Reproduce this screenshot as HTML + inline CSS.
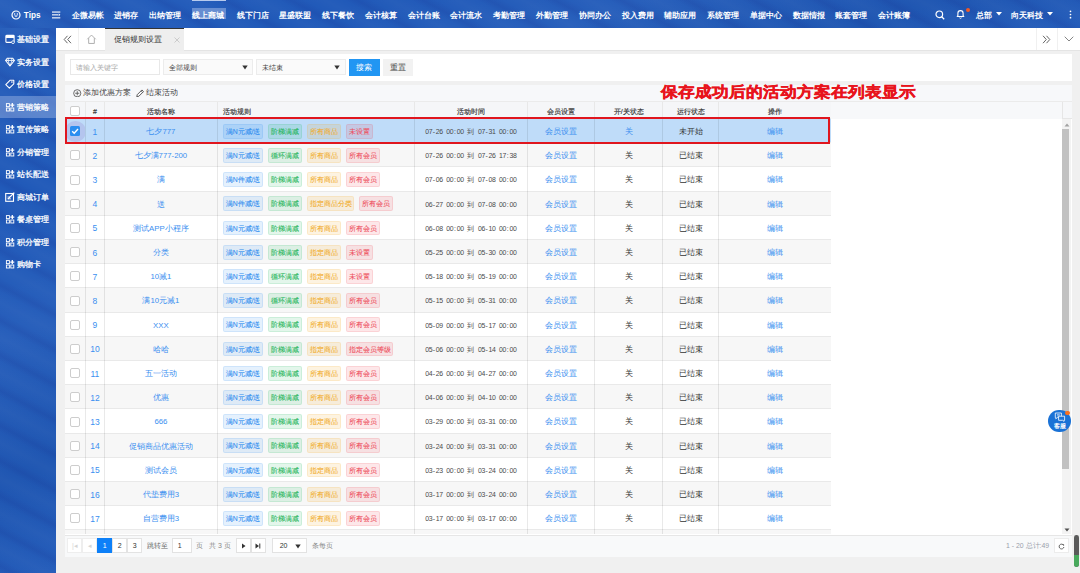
<!DOCTYPE html>
<html><head><meta charset="utf-8"><title>促销规则设置</title><style>
*{margin:0;padding:0;box-sizing:border-box}
html,body{width:1080px;height:573px;overflow:hidden;background:#f0f0f0;font-family:"Liberation Sans", sans-serif;}
.abs{position:absolute}
.bluebg{background-color:#215ab9;
background-image:
 repeating-linear-gradient(28deg, rgba(10,10,110,0.0) 0px, rgba(10,10,110,0.09) 6px, rgba(10,10,110,0.0) 13px, rgba(255,255,255,0.02) 22px, rgba(10,10,110,0.0) 31px),
 linear-gradient(160deg, rgba(255,255,255,0.03) 0%, rgba(0,0,0,0.0) 30%, rgba(255,255,255,0.03) 55%, rgba(0,0,0,0.04) 80%, rgba(255,255,255,0.02) 100%);
}
.nav{position:absolute;top:9.5px;height:11px;line-height:11px;color:#fff;font-size:8px;font-weight:bold;white-space:nowrap;letter-spacing:0px}
.side{position:absolute;left:0;width:56px;height:22.5px;color:#fff;font-size:8px;white-space:nowrap}
.side > span{position:absolute;left:17px;top:6px;line-height:11px;-webkit-text-stroke:0.25px #fff}
.side svg{position:absolute;left:5px;top:6.5px}
.cell{position:absolute;text-align:center;white-space:nowrap;overflow:visible}
.tag{position:absolute;height:14.7px;border:1px solid;border-radius:2px;font-size:6.8px;line-height:14.2px;-webkit-text-stroke:0.08px currentColor;text-align:center;white-space:nowrap}
.tb{background:rgba(45,140,240,0.12);border-color:rgba(45,140,240,0.12);color:#2d8cf0}
.tg{background:rgba(25,180,90,0.12);border-color:rgba(25,180,90,0.12);color:#1fb55a}
.to{background:rgba(240,165,20,0.13);border-color:rgba(240,165,20,0.13);color:#f2ac2a}
.tr{background:rgba(235,60,70,0.12);border-color:rgba(235,60,70,0.12);color:#ee4c5a}
.cb{position:absolute;width:10px;height:10px;border:1.5px solid #cdcdcd;border-radius:2px;background:#fff}
.link{color:#3b8ff0}
.mono{font-family:"Liberation Mono", monospace}
.tm{font-size:6.9px;line-height:10px;color:#4a4a4a}
.tm i{font-style:normal;display:inline-block;width:3.53px;text-align:center}
.pbtn{position:absolute;top:538.3px;height:15px;border:1px solid #e2e2e2;background:#fff;font-size:7px;line-height:13px;text-align:center;color:#333}
</style><style>.k8{display:inline-block;width:8px;text-align:center;text-indent:0}
.k7{display:inline-block;width:7px;text-align:center;text-indent:0}
.k17{display:inline-block;width:17px;text-align:center;text-indent:0}
.k6{display:inline-block;width:6px;text-align:center;text-indent:0}
</style></head><body>
<div class="abs bluebg" style="left:0;top:0;width:1080px;height:28px"></div>
<div class="abs bluebg" style="left:0;top:28px;width:56px;height:545px"></div>
<svg class="abs" style="left:10.8px;top:9.8px" width="10" height="10" viewBox="0 0 10 10"><circle cx="5" cy="5" r="4" fill="none" stroke="#fff" stroke-width="1.2"></circle><circle cx="3.6" cy="3.9" r="0.75" fill="#fff"></circle><circle cx="6.4" cy="3.9" r="0.75" fill="#fff"></circle><path d="M3.1 5.6 Q5 8 6.9 5.6 Z" fill="#fff"></path></svg>
<div class="nav" style="left:23.8px;top:9.8px;font-size:8.2px;height:12px;line-height:12px">Tips</div>
<svg class="abs" style="left:52px;top:10.6px" width="9" height="8" viewBox="0 0 9 8"><rect x="0" y="0.5" width="8.3" height="1.1" fill="#fff"></rect><rect x="0" y="3.3" width="6.2" height="1.1" fill="#fff"></rect><path d="M6.7 2.5 L8.4 3.85 L6.7 5.2z" fill="#fff"></path><rect x="0" y="6.3" width="8.3" height="1.1" fill="#fff"></rect></svg>
<div class="abs" style="left:191.5px;top:8.3px;width:34.2px;height:11.1px;background:rgba(195,210,240,0.42)"></div>
<div class="abs" style="left:192px;top:0;width:33.5px;height:1.2px;background:rgba(220,230,250,0.8)"></div>
<div class="nav" style="left:72px;width:32px"><span class="k8">企</span><span class="k8">微</span><span class="k8">易</span><span class="k8">帐</span></div>
<div class="nav" style="left:114px;width:24px"><span class="k8">进</span><span class="k8">销</span><span class="k8">存</span></div>
<div class="nav" style="left:149px;width:32px"><span class="k8">出</span><span class="k8">纳</span><span class="k8">管</span><span class="k8">理</span></div>
<div class="nav" style="left:192px;width:32px"><span class="k8">线</span><span class="k8">上</span><span class="k8">商</span><span class="k8">城</span></div>
<div class="nav" style="left:236.5px;width:32px"><span class="k8">线</span><span class="k8">下</span><span class="k8">门</span><span class="k8">店</span></div>
<div class="nav" style="left:279px;width:32px"><span class="k8">星</span><span class="k8">盛</span><span class="k8">联</span><span class="k8">盟</span></div>
<div class="nav" style="left:322px;width:32px"><span class="k8">线</span><span class="k8">下</span><span class="k8">餐</span><span class="k8">饮</span></div>
<div class="nav" style="left:365px;width:32px"><span class="k8">会</span><span class="k8">计</span><span class="k8">核</span><span class="k8">算</span></div>
<div class="nav" style="left:407.8px;width:32px"><span class="k8">会</span><span class="k8">计</span><span class="k8">台</span><span class="k8">账</span></div>
<div class="nav" style="left:450px;width:32px"><span class="k8">会</span><span class="k8">计</span><span class="k8">流</span><span class="k8">水</span></div>
<div class="nav" style="left:493px;width:32px"><span class="k8">考</span><span class="k8">勤</span><span class="k8">管</span><span class="k8">理</span></div>
<div class="nav" style="left:535.5px;width:32px"><span class="k8">外</span><span class="k8">勤</span><span class="k8">管</span><span class="k8">理</span></div>
<div class="nav" style="left:578.75px;width:32px"><span class="k8">协</span><span class="k8">同</span><span class="k8">办</span><span class="k8">公</span></div>
<div class="nav" style="left:621.7px;width:32px"><span class="k8">投</span><span class="k8">入</span><span class="k8">费</span><span class="k8">用</span></div>
<div class="nav" style="left:664px;width:32px"><span class="k8">辅</span><span class="k8">助</span><span class="k8">应</span><span class="k8">用</span></div>
<div class="nav" style="left:707.4px;width:32px"><span class="k8">系</span><span class="k8">统</span><span class="k8">管</span><span class="k8">理</span></div>
<div class="nav" style="left:750px;width:32px"><span class="k8">单</span><span class="k8">据</span><span class="k8">中</span><span class="k8">心</span></div>
<div class="nav" style="left:792.6px;width:32px"><span class="k8">数</span><span class="k8">据</span><span class="k8">情</span><span class="k8">报</span></div>
<div class="nav" style="left:835px;width:32px"><span class="k8">账</span><span class="k8">套</span><span class="k8">管</span><span class="k8">理</span></div>
<div class="nav" style="left:878px;width:32px"><span class="k8">会</span><span class="k8">计</span><span class="k8">账</span><span class="k8">簿</span></div>
<svg class="abs" style="left:935px;top:9.5px" width="10" height="10" viewBox="0 0 10 10"><circle cx="4.3" cy="4.3" r="3.3" fill="none" stroke="#fff" stroke-width="1.2"></circle><path d="M6.7 6.7 L9.2 9.2" stroke="#fff" stroke-width="1.3"></path></svg>
<svg class="abs" style="left:955.5px;top:9px" width="9" height="10" viewBox="0 0 9 10"><path d="M1.2 7.5 L1.9 6.6 V4.2 A2.6 2.6 0 0 1 7.1 4.2 V6.6 L7.8 7.5 Z" fill="none" stroke="#fff" stroke-width="1.1" stroke-linejoin="round"></path><path d="M3.5 8.8 Q4.5 9.8 5.5 8.8" stroke="#fff" stroke-width="1" fill="none"></path></svg>
<div class="abs" style="left:965.6px;top:7.6px;width:4.2px;height:4.2px;border-radius:50%;background:#f05a28"></div>
<div class="nav" style="left:975.8px;width:16px"><span class="k8">总</span><span class="k8">部</span></div>
<svg class="abs" style="left:995.5px;top:12px" width="6" height="4" viewBox="0 0 6 4"><path d="M0 0 H6 L3 3.6z" fill="#fff"></path></svg>
<div class="nav" style="left:1010.8px;width:32px"><span class="k8">向</span><span class="k8">天</span><span class="k8">科</span><span class="k8">技</span></div>
<svg class="abs" style="left:1046.5px;top:12px" width="6" height="4" viewBox="0 0 6 4"><path d="M0 0 H6 L3 3.6z" fill="#fff"></path></svg>
<svg class="abs" style="left:1068.5px;top:10px" width="3" height="9" viewBox="0 0 3 9"><circle cx="1.5" cy="1.3" r="0.85" fill="#fff"></circle><circle cx="1.5" cy="4.5" r="0.85" fill="#fff"></circle><circle cx="1.5" cy="7.7" r="0.85" fill="#fff"></circle></svg>
<div class="side" style="top:28.3px;"><svg style="position:absolute;left:5px;top:6.2px" width="10" height="10" viewBox="0 0 10 10"><rect x="0.9" y="1.4" width="8.2" height="7" rx="0.7" fill="none" stroke="#fff" stroke-width="1.1"></rect><rect x="0.9" y="1.4" width="8.2" height="2.6" fill="#fff"></rect><circle cx="8" cy="8.2" r="1.4" fill="#2159b8" stroke="#fff" stroke-width="0.8"></circle></svg><span><span class="k8">基</span><span class="k8">础</span><span class="k8">设</span><span class="k8">置</span></span></div>
<div class="side" style="top:50.8px;"><svg style="position:absolute;left:5px;top:6.2px" width="10" height="10" viewBox="0 0 10 10"><path d="M0.6 3.5 L2.4 1.2 H7.6 L9.4 3.5 L5 9 Z" fill="none" stroke="#fff" stroke-width="1.1" stroke-linejoin="round"></path><path d="M0.6 3.5 H9.4 M3.5 1.2 L3 3.5 L5 9 L7 3.5 L6.5 1.2" fill="none" stroke="#fff" stroke-width="0.8"></path></svg><span><span class="k8">实</span><span class="k8">务</span><span class="k8">设</span><span class="k8">置</span></span></div>
<div class="side" style="top:73.3px;"><svg style="position:absolute;left:5px;top:6.2px" width="10" height="10" viewBox="0 0 10 10"><path d="M0.8 5.6 L5.2 1.2 H8.8 V4.8 L4.4 9.2 Z" fill="none" stroke="#fff" stroke-width="1.1" stroke-linejoin="round"></path><circle cx="6.9" cy="3.1" r="0.8" fill="#fff"></circle></svg><span><span class="k8">价</span><span class="k8">格</span><span class="k8">设</span><span class="k8">置</span></span></div>
<div class="side" style="top:95.8px;background:rgba(160,185,230,0.45);"><svg style="position:absolute;left:5px;top:6.2px" width="10" height="10" viewBox="0 0 10 10"><rect x="1.4" y="1.6" width="3" height="3" fill="none" stroke="#fff" stroke-width="0.9"></rect><rect x="1.4" y="6" width="3" height="3" fill="none" stroke="#fff" stroke-width="0.9"></rect><rect x="5.8" y="6" width="3" height="3" fill="none" stroke="#fff" stroke-width="0.9"></rect><path d="M7.3 1.1 V5.1 M5.3 3.1 H9.3" stroke="#fff" stroke-width="1.3"></path></svg><span><span class="k8">营</span><span class="k8">销</span><span class="k8">策</span><span class="k8">略</span></span></div>
<div class="side" style="top:118.3px;"><svg style="position:absolute;left:5px;top:6.2px" width="10" height="10" viewBox="0 0 10 10"><rect x="1.4" y="1.6" width="3" height="3" fill="none" stroke="#fff" stroke-width="0.9"></rect><rect x="1.4" y="6" width="3" height="3" fill="none" stroke="#fff" stroke-width="0.9"></rect><rect x="5.8" y="6" width="3" height="3" fill="none" stroke="#fff" stroke-width="0.9"></rect><path d="M7.3 1.1 V5.1 M5.3 3.1 H9.3" stroke="#fff" stroke-width="1.3"></path></svg><span><span class="k8">宣</span><span class="k8">传</span><span class="k8">策</span><span class="k8">略</span></span></div>
<div class="side" style="top:140.8px;"><svg style="position:absolute;left:5px;top:6.2px" width="10" height="10" viewBox="0 0 10 10"><rect x="1.4" y="1.6" width="3" height="3" fill="none" stroke="#fff" stroke-width="0.9"></rect><rect x="1.4" y="6" width="3" height="3" fill="none" stroke="#fff" stroke-width="0.9"></rect><rect x="5.8" y="6" width="3" height="3" fill="none" stroke="#fff" stroke-width="0.9"></rect><path d="M7.3 1.1 V5.1 M5.3 3.1 H9.3" stroke="#fff" stroke-width="1.3"></path></svg><span><span class="k8">分</span><span class="k8">销</span><span class="k8">管</span><span class="k8">理</span></span></div>
<div class="side" style="top:163.3px;"><svg style="position:absolute;left:5px;top:6.2px" width="10" height="10" viewBox="0 0 10 10"><rect x="1.4" y="1.6" width="3" height="3" fill="none" stroke="#fff" stroke-width="0.9"></rect><rect x="1.4" y="6" width="3" height="3" fill="none" stroke="#fff" stroke-width="0.9"></rect><rect x="5.8" y="6" width="3" height="3" fill="none" stroke="#fff" stroke-width="0.9"></rect><path d="M7.3 1.1 V5.1 M5.3 3.1 H9.3" stroke="#fff" stroke-width="1.3"></path></svg><span><span class="k8">站</span><span class="k8">长</span><span class="k8">配</span><span class="k8">送</span></span></div>
<div class="side" style="top:185.8px;"><svg style="position:absolute;left:5px;top:6.2px" width="10" height="10" viewBox="0 0 10 10"><rect x="0.7" y="1.5" width="7.8" height="7.8" fill="none" stroke="#fff" stroke-width="1.1"></rect><path d="M3 7 L9.3 0.7" stroke="#fff" stroke-width="1.2"></path><path d="M2.5 5 H5 M2.5 6.8 H6" stroke="#fff" stroke-width="0.8"></path></svg><span><span class="k8">商</span><span class="k8">城</span><span class="k8">订</span><span class="k8">单</span></span></div>
<div class="side" style="top:208.3px;"><svg style="position:absolute;left:5px;top:6.2px" width="10" height="10" viewBox="0 0 10 10"><rect x="1.4" y="1.6" width="3" height="3" fill="none" stroke="#fff" stroke-width="0.9"></rect><rect x="1.4" y="6" width="3" height="3" fill="none" stroke="#fff" stroke-width="0.9"></rect><rect x="5.8" y="6" width="3" height="3" fill="none" stroke="#fff" stroke-width="0.9"></rect><path d="M7.3 1.1 V5.1 M5.3 3.1 H9.3" stroke="#fff" stroke-width="1.3"></path></svg><span><span class="k8">餐</span><span class="k8">桌</span><span class="k8">管</span><span class="k8">理</span></span></div>
<div class="side" style="top:230.8px;"><svg style="position:absolute;left:5px;top:6.2px" width="10" height="10" viewBox="0 0 10 10"><rect x="1.4" y="1.6" width="3" height="3" fill="none" stroke="#fff" stroke-width="0.9"></rect><rect x="1.4" y="6" width="3" height="3" fill="none" stroke="#fff" stroke-width="0.9"></rect><rect x="5.8" y="6" width="3" height="3" fill="none" stroke="#fff" stroke-width="0.9"></rect><path d="M7.3 1.1 V5.1 M5.3 3.1 H9.3" stroke="#fff" stroke-width="1.3"></path></svg><span><span class="k8">积</span><span class="k8">分</span><span class="k8">管</span><span class="k8">理</span></span></div>
<div class="side" style="top:253.3px;"><svg style="position:absolute;left:5px;top:6.2px" width="10" height="10" viewBox="0 0 10 10"><rect x="1.4" y="1.6" width="3" height="3" fill="none" stroke="#fff" stroke-width="0.9"></rect><rect x="1.4" y="6" width="3" height="3" fill="none" stroke="#fff" stroke-width="0.9"></rect><rect x="5.8" y="6" width="3" height="3" fill="none" stroke="#fff" stroke-width="0.9"></rect><path d="M7.3 1.1 V5.1 M5.3 3.1 H9.3" stroke="#fff" stroke-width="1.3"></path></svg><span><span class="k8">购</span><span class="k8">物</span><span class="k8">卡</span></span></div>
<div class="abs" style="left:56px;top:28px;width:1024px;height:22.5px;background:#fff;border-bottom:1px solid #e4e4e4"></div>
<div class="abs" style="left:78px;top:28px;width:1px;height:22px;background:#f0f0f0"></div>
<svg class="abs" style="left:63px;top:35px" width="9" height="9" viewBox="0 0 9 9"><path d="M4.5 0.8 L1.2 4.5 L4.5 8.2 M8 0.8 L4.7 4.5 L8 8.2" fill="none" stroke="#666" stroke-width="1"></path></svg>
<svg class="abs" style="left:86px;top:33.5px" width="11" height="10.5" viewBox="0 0 10 10"><path d="M1 5 L5 1 L9 5 M2.3 4 V9 H7.7 V4" fill="none" stroke="#aaa" stroke-width="0.9"></path></svg>
<div class="abs" style="left:105px;top:28px;width:79px;height:22.5px;background:#eeeeee;border-top:1px solid #333"></div>
<div class="abs" style="left:114px;top:34.5px;font-size:7.8px;line-height:10px;color:#333;white-space:nowrap"><span class="k8">促</span><span class="k8">销</span><span class="k8">规</span><span class="k8">则</span><span class="k8">设</span><span class="k8">置</span></div>
<svg class="abs" style="left:173.5px;top:36.5px" width="6" height="6" viewBox="0 0 6 6"><path d="M0.5 0.5 L5.5 5.5 M5.5 0.5 L0.5 5.5" stroke="#bbb" stroke-width="0.7"></path></svg>
<div class="abs" style="left:1035.5px;top:28px;width:1px;height:22px;background:#f0f0f0"></div>
<div class="abs" style="left:1057px;top:28px;width:1px;height:22px;background:#f0f0f0"></div>
<svg class="abs" style="left:1042px;top:35px" width="9" height="9" viewBox="0 0 9 9"><path d="M1 0.8 L4.3 4.5 L1 8.2 M4.5 0.8 L7.8 4.5 L4.5 8.2" fill="none" stroke="#666" stroke-width="1"></path></svg>
<svg class="abs" style="left:1064px;top:36px" width="10" height="6" viewBox="0 0 10 6"><path d="M0.7 0.7 L5 5 L9.3 0.7" fill="none" stroke="#777" stroke-width="0.9"></path></svg>
<div class="abs" style="left:64.5px;top:54px;width:1007px;height:27px;background:#fff"></div>
<div class="abs" style="left:70px;top:59.3px;width:90px;height:16.2px;border:1px solid #e8e8e8;background:#fff"></div>
<div class="abs" style="left:76px;top:62.5px;font-size:7px;line-height:10px;color:#a8a8a8;white-space:nowrap"><span class="k7">请</span><span class="k7">输</span><span class="k7">入</span><span class="k7">关</span><span class="k7">键</span><span class="k7">字</span></div>
<div class="abs" style="left:163px;top:59.3px;width:90px;height:16.2px;border:1px solid #ececec;background:#fafafa"></div>
<div class="abs" style="left:169px;top:62.5px;font-size:7px;line-height:10px;color:#444;white-space:nowrap"><span class="k7">全</span><span class="k7">部</span><span class="k7">规</span><span class="k7">则</span></div>
<svg class="abs" style="left:241.5px;top:65px" width="6" height="5" viewBox="0 0 6 5"><path d="M0.3 0.5 H5.7 L3 4.5z" fill="#333"></path></svg>
<div class="abs" style="left:256px;top:59.3px;width:89.75px;height:16.2px;border:1px solid #ececec;background:#fafafa"></div>
<div class="abs" style="left:262px;top:62.5px;font-size:7px;line-height:10px;color:#444;white-space:nowrap"><span class="k7">未</span><span class="k7">结</span><span class="k7">束</span></div>
<svg class="abs" style="left:334.25px;top:65px" width="6" height="5" viewBox="0 0 6 5"><path d="M0.3 0.5 H5.7 L3 4.5z" fill="#333"></path></svg>
<div class="abs" style="left:348.75px;top:58.75px;width:31.25px;height:17px;background:#2196f3;color:#fff;font-size:7.5px;line-height:17px;text-align:center"><span class="k8">搜</span><span class="k8">索</span></div>
<div class="abs" style="left:382.5px;top:58.75px;width:30.5px;height:17px;background:#f2f2f2;color:#444;font-size:7.5px;line-height:17px;text-align:center"><span class="k8">重</span><span class="k8">置</span></div>
<div class="abs" style="left:64.5px;top:85px;width:1007px;height:472px;background:#fff"></div>
<div class="abs" style="left:64.5px;top:85px;width:1007px;height:17.3px;background:#f7f8fa;border-bottom:1px solid #ebebeb"></div>
<svg class="abs" style="left:73.3px;top:88.5px" width="8.5" height="8.5" viewBox="0 0 9 9"><circle cx="4.5" cy="4.5" r="3.8" fill="none" stroke="#555" stroke-width="0.9"></circle><path d="M4.5 2.3 V6.7 M2.3 4.5 H6.7" stroke="#555" stroke-width="0.9"></path></svg>
<div class="abs" style="left:83px;top:88px;font-size:7.5px;line-height:10px;color:#444;white-space:nowrap"><span class="k8">添</span><span class="k8">加</span><span class="k8">优</span><span class="k8">惠</span><span class="k8">方</span><span class="k8">案</span></div>
<svg class="abs" style="left:135.5px;top:88.5px" width="8.5" height="8.5" viewBox="0 0 9 9"><path d="M0.8 8.2 L1.3 6 L6.3 1 L8 2.7 L3 7.7 Z" fill="none" stroke="#555" stroke-width="1"></path><path d="M5.3 2 L7 3.7" stroke="#555" stroke-width="0.8"></path></svg>
<div class="abs" style="left:146.2px;top:88px;font-size:7.8px;line-height:10px;color:#444;white-space:nowrap"><span class="k8">结</span><span class="k8">束</span><span class="k8">活</span><span class="k8">动</span></div>
<div class="abs" style="left:64.5px;top:102.3px;width:997px;height:16.799999999999997px;background:#f7f8fa"></div>
<div class="abs" style="left:64.5px;top:102.3px;width:766.5px;height:16.799999999999997px;background:#f5f6f8;border-bottom:1px solid #e6e6e6"></div>
<div class="abs" style="left:1061.5px;top:102.3px;width:10px;height:16.799999999999997px;background:#f6f7f9;border-left:1px solid #e6e6e6;border-bottom:1px solid #e6e6e6"></div>
<div class="abs" style="left:84.9px;top:102.3px;width:1px;height:16.799999999999997px;background:#e8e8e8"></div>
<div class="abs" style="left:104.0px;top:102.3px;width:1px;height:16.799999999999997px;background:#e8e8e8"></div>
<div class="abs" style="left:216.8px;top:102.3px;width:1px;height:16.799999999999997px;background:#e8e8e8"></div>
<div class="abs" style="left:413.8px;top:102.3px;width:1px;height:16.799999999999997px;background:#e8e8e8"></div>
<div class="abs" style="left:527.0px;top:102.3px;width:1px;height:16.799999999999997px;background:#e8e8e8"></div>
<div class="abs" style="left:594.4px;top:102.3px;width:1px;height:16.799999999999997px;background:#e8e8e8"></div>
<div class="abs" style="left:662.3px;top:102.3px;width:1px;height:16.799999999999997px;background:#e8e8e8"></div>
<div class="abs" style="left:717.9px;top:102.3px;width:1px;height:16.799999999999997px;background:#e8e8e8"></div>
<div class="cb" style="left:70.2px;top:105.8px"></div>
<div class="cell" style="left:85.4px;width:19.099999999999994px;top:106.5px;font-size:7px;line-height:10px;color:#333;-webkit-text-stroke:0.15px #333">#</div>
<div class="cell" style="left:104.5px;width:112.80000000000001px;top:106.5px;font-size:7px;line-height:10px;color:#333;-webkit-text-stroke:0.15px #333"><span class="k7">活</span><span class="k7">动</span><span class="k7">名</span><span class="k7">称</span></div>
<div class="cell" style="left:222.9px;top:106.5px;font-size:7px;line-height:10px;color:#333;-webkit-text-stroke:0.15px #333;text-align:left"><span class="k7">活</span><span class="k7">动</span><span class="k7">规</span><span class="k7">则</span></div>
<div class="cell" style="left:414.3px;width:113.19999999999999px;top:106.5px;font-size:7px;line-height:10px;color:#333;-webkit-text-stroke:0.15px #333"><span class="k7">活</span><span class="k7">动</span><span class="k7">时</span><span class="k7">间</span></div>
<div class="cell" style="left:527.5px;width:67.39999999999998px;top:106.5px;font-size:7px;line-height:10px;color:#333;-webkit-text-stroke:0.15px #333"><span class="k7">会</span><span class="k7">员</span><span class="k7">设</span><span class="k7">置</span></div>
<div class="cell" style="left:594.9px;width:67.89999999999998px;top:106.5px;font-size:7px;line-height:10px;color:#333;-webkit-text-stroke:0.15px #333"><span class="k7">开</span>/<span class="k7">关</span><span class="k7">状</span><span class="k7">态</span></div>
<div class="cell" style="left:662.8px;width:55.60000000000002px;top:106.5px;font-size:7px;line-height:10px;color:#333;-webkit-text-stroke:0.15px #333"><span class="k7">运</span><span class="k7">行</span><span class="k7">状</span><span class="k7">态</span></div>
<div class="cell" style="left:718.4px;width:112.60000000000002px;top:106.5px;font-size:7px;line-height:10px;color:#333;-webkit-text-stroke:0.15px #333"><span class="k7">操</span><span class="k7">作</span></div>
<div class="abs" style="left:64.5px;top:119.1px;width:997px;height:415.4px;overflow:hidden">
<div class="abs" style="left:0;top:0.00px;width:766.5px;height:24.2px;background:#bfdcf9;border-bottom:1px solid #e9e9e9"></div>
<div class="abs" style="left:20.40px;top:0.00px;width:1px;height:24.2px;background:rgba(0,0,0,0.085)"></div>
<div class="abs" style="left:39.50px;top:0.00px;width:1px;height:24.2px;background:rgba(0,0,0,0.085)"></div>
<div class="abs" style="left:152.30px;top:0.00px;width:1px;height:24.2px;background:rgba(0,0,0,0.085)"></div>
<div class="abs" style="left:349.30px;top:0.00px;width:1px;height:24.2px;background:rgba(0,0,0,0.085)"></div>
<div class="abs" style="left:462.50px;top:0.00px;width:1px;height:24.2px;background:rgba(0,0,0,0.085)"></div>
<div class="abs" style="left:529.90px;top:0.00px;width:1px;height:24.2px;background:rgba(0,0,0,0.085)"></div>
<div class="abs" style="left:597.80px;top:0.00px;width:1px;height:24.2px;background:rgba(0,0,0,0.085)"></div>
<div class="abs" style="left:653.40px;top:0.00px;width:1px;height:24.2px;background:rgba(0,0,0,0.085)"></div>
<div class="abs" style="left:0;top:0;width:20.9px;height:24.2px;overflow:hidden"><div style="position:absolute;left:0.20px;top:1.60px;width:21px;height:21px;border-radius:50%;background:#b4c5ee"></div></div>
<svg class="abs" style="left:5.70px;top:7.10px" width="10" height="10" viewBox="0 0 10 10"><rect width="10" height="10" rx="1.5" fill="#2b8ef0"></rect><path d="M2.2 5.2 L4.2 7.2 L8 3" fill="none" stroke="#fff" stroke-width="1.4"></path></svg>
<div class="cell link" style="left:20.90px;width:19.10px;top:7.50px;font-size:8.5px;line-height:10px">1</div>
<div class="cell link" style="left:40.00px;width:112.80px;top:7.90px;font-size:7.8px;line-height:10px"><span class="k8">七</span><span class="k8">夕</span>777</div>
<div class="tag tb" style="left:158.70px;top:4.75px;width:39.8px"><span class="k7">满</span>N<span class="k7">元</span><span class="k7">减</span>/<span class="k7">送</span></div>
<div class="tag tg" style="left:203.70px;top:4.75px;width:33.7px"><span class="k7">阶</span><span class="k7">梯</span><span class="k7">满</span><span class="k7">减</span></div>
<div class="tag to" style="left:242.60px;top:4.75px;width:33.9px"><span class="k7">所</span><span class="k7">有</span><span class="k7">商</span><span class="k7">品</span></div>
<div class="tag tr" style="left:281.70px;top:4.75px;width:27px"><span class="k7">未</span><span class="k7">设</span><span class="k7">置</span></div>
<div class="cell tm" style="left:349.80px;width:113.20px;top:7.90px"><i>0</i><i>7</i><i>-</i><i>2</i><i>6</i><i> </i><i>0</i><i>0</i><i>:</i><i>0</i><i>0</i><i> </i><i style="width:7.06px">到</i><i> </i><i>0</i><i>7</i><i>-</i><i>3</i><i>1</i><i> </i><i>0</i><i>0</i><i>:</i><i>0</i><i>0</i></div>
<div class="cell link" style="left:463.00px;width:67.40px;top:7.90px;font-size:7.8px;line-height:10px"><span class="k8">会</span><span class="k8">员</span><span class="k8">设</span><span class="k8">置</span></div>
<div class="cell" style="left:530.40px;width:67.90px;top:7.90px;font-size:7.8px;line-height:10px;color:#3b8ff0"><span class="k8">关</span></div>
<div class="cell" style="left:598.30px;width:55.60px;top:7.90px;font-size:7.8px;line-height:10px;color:#333"><span class="k8">未</span><span class="k8">开</span><span class="k8">始</span></div>
<div class="cell link" style="left:653.90px;width:112.60px;top:7.90px;font-size:7.8px;line-height:10px"><span class="k8">编</span><span class="k8">辑</span></div>
<div class="abs" style="left:0;top:24.20px;width:766.5px;height:24.2px;background:#f7f7f7;border-bottom:1px solid #e9e9e9"></div>
<div class="abs" style="left:20.40px;top:24.20px;width:1px;height:24.2px;background:rgba(0,0,0,0.085)"></div>
<div class="abs" style="left:39.50px;top:24.20px;width:1px;height:24.2px;background:rgba(0,0,0,0.085)"></div>
<div class="abs" style="left:152.30px;top:24.20px;width:1px;height:24.2px;background:rgba(0,0,0,0.085)"></div>
<div class="abs" style="left:349.30px;top:24.20px;width:1px;height:24.2px;background:rgba(0,0,0,0.085)"></div>
<div class="abs" style="left:462.50px;top:24.20px;width:1px;height:24.2px;background:rgba(0,0,0,0.085)"></div>
<div class="abs" style="left:529.90px;top:24.20px;width:1px;height:24.2px;background:rgba(0,0,0,0.085)"></div>
<div class="abs" style="left:597.80px;top:24.20px;width:1px;height:24.2px;background:rgba(0,0,0,0.085)"></div>
<div class="abs" style="left:653.40px;top:24.20px;width:1px;height:24.2px;background:rgba(0,0,0,0.085)"></div>
<div class="cb" style="left:5.70px;top:31.30px"></div>
<div class="cell link" style="left:20.90px;width:19.10px;top:31.70px;font-size:8.5px;line-height:10px">2</div>
<div class="cell link" style="left:40.00px;width:112.80px;top:32.10px;font-size:7.8px;line-height:10px"><span class="k8">七</span><span class="k8">夕</span><span class="k8">满</span>777-200</div>
<div class="tag tb" style="left:158.70px;top:28.95px;width:39.8px"><span class="k7">满</span>N<span class="k7">元</span><span class="k7">减</span>/<span class="k7">送</span></div>
<div class="tag tg" style="left:203.70px;top:28.95px;width:33.7px"><span class="k7">循</span><span class="k7">环</span><span class="k7">满</span><span class="k7">减</span></div>
<div class="tag to" style="left:242.60px;top:28.95px;width:33.9px"><span class="k7">所</span><span class="k7">有</span><span class="k7">商</span><span class="k7">品</span></div>
<div class="tag tr" style="left:281.70px;top:28.95px;width:33.9px"><span class="k7">所</span><span class="k7">有</span><span class="k7">会</span><span class="k7">员</span></div>
<div class="cell tm" style="left:349.80px;width:113.20px;top:32.10px"><i>0</i><i>7</i><i>-</i><i>2</i><i>6</i><i> </i><i>0</i><i>0</i><i>:</i><i>0</i><i>0</i><i> </i><i style="width:7.06px">到</i><i> </i><i>0</i><i>7</i><i>-</i><i>2</i><i>6</i><i> </i><i>1</i><i>7</i><i>:</i><i>3</i><i>8</i></div>
<div class="cell link" style="left:463.00px;width:67.40px;top:32.10px;font-size:7.8px;line-height:10px"><span class="k8">会</span><span class="k8">员</span><span class="k8">设</span><span class="k8">置</span></div>
<div class="cell" style="left:530.40px;width:67.90px;top:32.10px;font-size:7.8px;line-height:10px;color:#333"><span class="k8">关</span></div>
<div class="cell" style="left:598.30px;width:55.60px;top:32.10px;font-size:7.8px;line-height:10px;color:#333"><span class="k8">已</span><span class="k8">结</span><span class="k8">束</span></div>
<div class="cell link" style="left:653.90px;width:112.60px;top:32.10px;font-size:7.8px;line-height:10px"><span class="k8">编</span><span class="k8">辑</span></div>
<div class="abs" style="left:0;top:48.40px;width:766.5px;height:24.2px;background:#fff;border-bottom:1px solid #e9e9e9"></div>
<div class="abs" style="left:20.40px;top:48.40px;width:1px;height:24.2px;background:rgba(0,0,0,0.085)"></div>
<div class="abs" style="left:39.50px;top:48.40px;width:1px;height:24.2px;background:rgba(0,0,0,0.085)"></div>
<div class="abs" style="left:152.30px;top:48.40px;width:1px;height:24.2px;background:rgba(0,0,0,0.085)"></div>
<div class="abs" style="left:349.30px;top:48.40px;width:1px;height:24.2px;background:rgba(0,0,0,0.085)"></div>
<div class="abs" style="left:462.50px;top:48.40px;width:1px;height:24.2px;background:rgba(0,0,0,0.085)"></div>
<div class="abs" style="left:529.90px;top:48.40px;width:1px;height:24.2px;background:rgba(0,0,0,0.085)"></div>
<div class="abs" style="left:597.80px;top:48.40px;width:1px;height:24.2px;background:rgba(0,0,0,0.085)"></div>
<div class="abs" style="left:653.40px;top:48.40px;width:1px;height:24.2px;background:rgba(0,0,0,0.085)"></div>
<div class="cb" style="left:5.70px;top:55.50px"></div>
<div class="cell link" style="left:20.90px;width:19.10px;top:55.90px;font-size:8.5px;line-height:10px">3</div>
<div class="cell link" style="left:40.00px;width:112.80px;top:56.30px;font-size:7.8px;line-height:10px"><span class="k8">满</span></div>
<div class="tag tb" style="left:158.70px;top:53.15px;width:39.8px"><span class="k7">满</span>N<span class="k7">件</span><span class="k7">减</span>/<span class="k7">送</span></div>
<div class="tag tg" style="left:203.70px;top:53.15px;width:33.7px"><span class="k7">阶</span><span class="k7">梯</span><span class="k7">满</span><span class="k7">减</span></div>
<div class="tag to" style="left:242.60px;top:53.15px;width:33.9px"><span class="k7">所</span><span class="k7">有</span><span class="k7">商</span><span class="k7">品</span></div>
<div class="tag tr" style="left:281.70px;top:53.15px;width:33.9px"><span class="k7">所</span><span class="k7">有</span><span class="k7">会</span><span class="k7">员</span></div>
<div class="cell tm" style="left:349.80px;width:113.20px;top:56.30px"><i>0</i><i>7</i><i>-</i><i>0</i><i>6</i><i> </i><i>0</i><i>0</i><i>:</i><i>0</i><i>0</i><i> </i><i style="width:7.06px">到</i><i> </i><i>0</i><i>7</i><i>-</i><i>0</i><i>8</i><i> </i><i>0</i><i>0</i><i>:</i><i>0</i><i>0</i></div>
<div class="cell link" style="left:463.00px;width:67.40px;top:56.30px;font-size:7.8px;line-height:10px"><span class="k8">会</span><span class="k8">员</span><span class="k8">设</span><span class="k8">置</span></div>
<div class="cell" style="left:530.40px;width:67.90px;top:56.30px;font-size:7.8px;line-height:10px;color:#333"><span class="k8">关</span></div>
<div class="cell" style="left:598.30px;width:55.60px;top:56.30px;font-size:7.8px;line-height:10px;color:#333"><span class="k8">已</span><span class="k8">结</span><span class="k8">束</span></div>
<div class="cell link" style="left:653.90px;width:112.60px;top:56.30px;font-size:7.8px;line-height:10px"><span class="k8">编</span><span class="k8">辑</span></div>
<div class="abs" style="left:0;top:72.60px;width:766.5px;height:24.2px;background:#f7f7f7;border-bottom:1px solid #e9e9e9"></div>
<div class="abs" style="left:20.40px;top:72.60px;width:1px;height:24.2px;background:rgba(0,0,0,0.085)"></div>
<div class="abs" style="left:39.50px;top:72.60px;width:1px;height:24.2px;background:rgba(0,0,0,0.085)"></div>
<div class="abs" style="left:152.30px;top:72.60px;width:1px;height:24.2px;background:rgba(0,0,0,0.085)"></div>
<div class="abs" style="left:349.30px;top:72.60px;width:1px;height:24.2px;background:rgba(0,0,0,0.085)"></div>
<div class="abs" style="left:462.50px;top:72.60px;width:1px;height:24.2px;background:rgba(0,0,0,0.085)"></div>
<div class="abs" style="left:529.90px;top:72.60px;width:1px;height:24.2px;background:rgba(0,0,0,0.085)"></div>
<div class="abs" style="left:597.80px;top:72.60px;width:1px;height:24.2px;background:rgba(0,0,0,0.085)"></div>
<div class="abs" style="left:653.40px;top:72.60px;width:1px;height:24.2px;background:rgba(0,0,0,0.085)"></div>
<div class="cb" style="left:5.70px;top:79.70px"></div>
<div class="cell link" style="left:20.90px;width:19.10px;top:80.10px;font-size:8.5px;line-height:10px">4</div>
<div class="cell link" style="left:40.00px;width:112.80px;top:80.50px;font-size:7.8px;line-height:10px"><span class="k8">送</span></div>
<div class="tag tb" style="left:158.70px;top:77.35px;width:39.8px"><span class="k7">满</span>N<span class="k7">件</span><span class="k7">减</span>/<span class="k7">送</span></div>
<div class="tag tg" style="left:203.70px;top:77.35px;width:33.7px"><span class="k7">阶</span><span class="k7">梯</span><span class="k7">满</span><span class="k7">减</span></div>
<div class="tag to" style="left:242.60px;top:77.35px;width:47px"><span class="k7">指</span><span class="k7">定</span><span class="k7">商</span><span class="k7">品</span><span class="k7">分</span><span class="k7">类</span></div>
<div class="tag tr" style="left:294.80px;top:77.35px;width:33.9px"><span class="k7">所</span><span class="k7">有</span><span class="k7">会</span><span class="k7">员</span></div>
<div class="cell tm" style="left:349.80px;width:113.20px;top:80.50px"><i>0</i><i>6</i><i>-</i><i>2</i><i>7</i><i> </i><i>0</i><i>0</i><i>:</i><i>0</i><i>0</i><i> </i><i style="width:7.06px">到</i><i> </i><i>0</i><i>7</i><i>-</i><i>0</i><i>8</i><i> </i><i>0</i><i>0</i><i>:</i><i>0</i><i>0</i></div>
<div class="cell link" style="left:463.00px;width:67.40px;top:80.50px;font-size:7.8px;line-height:10px"><span class="k8">会</span><span class="k8">员</span><span class="k8">设</span><span class="k8">置</span></div>
<div class="cell" style="left:530.40px;width:67.90px;top:80.50px;font-size:7.8px;line-height:10px;color:#333"><span class="k8">关</span></div>
<div class="cell" style="left:598.30px;width:55.60px;top:80.50px;font-size:7.8px;line-height:10px;color:#333"><span class="k8">已</span><span class="k8">结</span><span class="k8">束</span></div>
<div class="cell link" style="left:653.90px;width:112.60px;top:80.50px;font-size:7.8px;line-height:10px"><span class="k8">编</span><span class="k8">辑</span></div>
<div class="abs" style="left:0;top:96.80px;width:766.5px;height:24.2px;background:#fff;border-bottom:1px solid #e9e9e9"></div>
<div class="abs" style="left:20.40px;top:96.80px;width:1px;height:24.2px;background:rgba(0,0,0,0.085)"></div>
<div class="abs" style="left:39.50px;top:96.80px;width:1px;height:24.2px;background:rgba(0,0,0,0.085)"></div>
<div class="abs" style="left:152.30px;top:96.80px;width:1px;height:24.2px;background:rgba(0,0,0,0.085)"></div>
<div class="abs" style="left:349.30px;top:96.80px;width:1px;height:24.2px;background:rgba(0,0,0,0.085)"></div>
<div class="abs" style="left:462.50px;top:96.80px;width:1px;height:24.2px;background:rgba(0,0,0,0.085)"></div>
<div class="abs" style="left:529.90px;top:96.80px;width:1px;height:24.2px;background:rgba(0,0,0,0.085)"></div>
<div class="abs" style="left:597.80px;top:96.80px;width:1px;height:24.2px;background:rgba(0,0,0,0.085)"></div>
<div class="abs" style="left:653.40px;top:96.80px;width:1px;height:24.2px;background:rgba(0,0,0,0.085)"></div>
<div class="cb" style="left:5.70px;top:103.90px"></div>
<div class="cell link" style="left:20.90px;width:19.10px;top:104.30px;font-size:8.5px;line-height:10px">5</div>
<div class="cell link" style="left:40.00px;width:112.80px;top:104.70px;font-size:7.8px;line-height:10px"><span class="k8">测</span><span class="k8">试</span>APP<span class="k8">小</span><span class="k8">程</span><span class="k8">序</span></div>
<div class="tag tb" style="left:158.70px;top:101.55px;width:39.8px"><span class="k7">满</span>N<span class="k7">元</span><span class="k7">减</span>/<span class="k7">送</span></div>
<div class="tag tg" style="left:203.70px;top:101.55px;width:33.7px"><span class="k7">阶</span><span class="k7">梯</span><span class="k7">满</span><span class="k7">减</span></div>
<div class="tag to" style="left:242.60px;top:101.55px;width:33.9px"><span class="k7">所</span><span class="k7">有</span><span class="k7">商</span><span class="k7">品</span></div>
<div class="tag tr" style="left:281.70px;top:101.55px;width:33.9px"><span class="k7">所</span><span class="k7">有</span><span class="k7">会</span><span class="k7">员</span></div>
<div class="cell tm" style="left:349.80px;width:113.20px;top:104.70px"><i>0</i><i>6</i><i>-</i><i>0</i><i>8</i><i> </i><i>0</i><i>0</i><i>:</i><i>0</i><i>0</i><i> </i><i style="width:7.06px">到</i><i> </i><i>0</i><i>6</i><i>-</i><i>1</i><i>0</i><i> </i><i>0</i><i>0</i><i>:</i><i>0</i><i>0</i></div>
<div class="cell link" style="left:463.00px;width:67.40px;top:104.70px;font-size:7.8px;line-height:10px"><span class="k8">会</span><span class="k8">员</span><span class="k8">设</span><span class="k8">置</span></div>
<div class="cell" style="left:530.40px;width:67.90px;top:104.70px;font-size:7.8px;line-height:10px;color:#333"><span class="k8">关</span></div>
<div class="cell" style="left:598.30px;width:55.60px;top:104.70px;font-size:7.8px;line-height:10px;color:#333"><span class="k8">已</span><span class="k8">结</span><span class="k8">束</span></div>
<div class="cell link" style="left:653.90px;width:112.60px;top:104.70px;font-size:7.8px;line-height:10px"><span class="k8">编</span><span class="k8">辑</span></div>
<div class="abs" style="left:0;top:121.00px;width:766.5px;height:24.2px;background:#f7f7f7;border-bottom:1px solid #e9e9e9"></div>
<div class="abs" style="left:20.40px;top:121.00px;width:1px;height:24.2px;background:rgba(0,0,0,0.085)"></div>
<div class="abs" style="left:39.50px;top:121.00px;width:1px;height:24.2px;background:rgba(0,0,0,0.085)"></div>
<div class="abs" style="left:152.30px;top:121.00px;width:1px;height:24.2px;background:rgba(0,0,0,0.085)"></div>
<div class="abs" style="left:349.30px;top:121.00px;width:1px;height:24.2px;background:rgba(0,0,0,0.085)"></div>
<div class="abs" style="left:462.50px;top:121.00px;width:1px;height:24.2px;background:rgba(0,0,0,0.085)"></div>
<div class="abs" style="left:529.90px;top:121.00px;width:1px;height:24.2px;background:rgba(0,0,0,0.085)"></div>
<div class="abs" style="left:597.80px;top:121.00px;width:1px;height:24.2px;background:rgba(0,0,0,0.085)"></div>
<div class="abs" style="left:653.40px;top:121.00px;width:1px;height:24.2px;background:rgba(0,0,0,0.085)"></div>
<div class="cb" style="left:5.70px;top:128.10px"></div>
<div class="cell link" style="left:20.90px;width:19.10px;top:128.50px;font-size:8.5px;line-height:10px">6</div>
<div class="cell link" style="left:40.00px;width:112.80px;top:128.90px;font-size:7.8px;line-height:10px"><span class="k8">分</span><span class="k8">类</span></div>
<div class="tag tb" style="left:158.70px;top:125.75px;width:39.8px"><span class="k7">满</span>N<span class="k7">元</span><span class="k7">减</span>/<span class="k7">送</span></div>
<div class="tag tg" style="left:203.70px;top:125.75px;width:33.7px"><span class="k7">阶</span><span class="k7">梯</span><span class="k7">满</span><span class="k7">减</span></div>
<div class="tag to" style="left:242.60px;top:125.75px;width:33.9px"><span class="k7">指</span><span class="k7">定</span><span class="k7">商</span><span class="k7">品</span></div>
<div class="tag tr" style="left:281.70px;top:125.75px;width:27px"><span class="k7">未</span><span class="k7">设</span><span class="k7">置</span></div>
<div class="cell tm" style="left:349.80px;width:113.20px;top:128.90px"><i>0</i><i>5</i><i>-</i><i>2</i><i>5</i><i> </i><i>0</i><i>0</i><i>:</i><i>0</i><i>0</i><i> </i><i style="width:7.06px">到</i><i> </i><i>0</i><i>5</i><i>-</i><i>3</i><i>0</i><i> </i><i>0</i><i>0</i><i>:</i><i>0</i><i>0</i></div>
<div class="cell link" style="left:463.00px;width:67.40px;top:128.90px;font-size:7.8px;line-height:10px"><span class="k8">会</span><span class="k8">员</span><span class="k8">设</span><span class="k8">置</span></div>
<div class="cell" style="left:530.40px;width:67.90px;top:128.90px;font-size:7.8px;line-height:10px;color:#333"><span class="k8">关</span></div>
<div class="cell" style="left:598.30px;width:55.60px;top:128.90px;font-size:7.8px;line-height:10px;color:#333"><span class="k8">已</span><span class="k8">结</span><span class="k8">束</span></div>
<div class="cell link" style="left:653.90px;width:112.60px;top:128.90px;font-size:7.8px;line-height:10px"><span class="k8">编</span><span class="k8">辑</span></div>
<div class="abs" style="left:0;top:145.20px;width:766.5px;height:24.2px;background:#fff;border-bottom:1px solid #e9e9e9"></div>
<div class="abs" style="left:20.40px;top:145.20px;width:1px;height:24.2px;background:rgba(0,0,0,0.085)"></div>
<div class="abs" style="left:39.50px;top:145.20px;width:1px;height:24.2px;background:rgba(0,0,0,0.085)"></div>
<div class="abs" style="left:152.30px;top:145.20px;width:1px;height:24.2px;background:rgba(0,0,0,0.085)"></div>
<div class="abs" style="left:349.30px;top:145.20px;width:1px;height:24.2px;background:rgba(0,0,0,0.085)"></div>
<div class="abs" style="left:462.50px;top:145.20px;width:1px;height:24.2px;background:rgba(0,0,0,0.085)"></div>
<div class="abs" style="left:529.90px;top:145.20px;width:1px;height:24.2px;background:rgba(0,0,0,0.085)"></div>
<div class="abs" style="left:597.80px;top:145.20px;width:1px;height:24.2px;background:rgba(0,0,0,0.085)"></div>
<div class="abs" style="left:653.40px;top:145.20px;width:1px;height:24.2px;background:rgba(0,0,0,0.085)"></div>
<div class="cb" style="left:5.70px;top:152.30px"></div>
<div class="cell link" style="left:20.90px;width:19.10px;top:152.70px;font-size:8.5px;line-height:10px">7</div>
<div class="cell link" style="left:40.00px;width:112.80px;top:153.10px;font-size:7.8px;line-height:10px">10<span class="k8">减</span>1</div>
<div class="tag tb" style="left:158.70px;top:149.95px;width:39.8px"><span class="k7">满</span>N<span class="k7">元</span><span class="k7">减</span>/<span class="k7">送</span></div>
<div class="tag tg" style="left:203.70px;top:149.95px;width:33.7px"><span class="k7">循</span><span class="k7">环</span><span class="k7">满</span><span class="k7">减</span></div>
<div class="tag to" style="left:242.60px;top:149.95px;width:33.9px"><span class="k7">指</span><span class="k7">定</span><span class="k7">商</span><span class="k7">品</span></div>
<div class="tag tr" style="left:281.70px;top:149.95px;width:27px"><span class="k7">未</span><span class="k7">设</span><span class="k7">置</span></div>
<div class="cell tm" style="left:349.80px;width:113.20px;top:153.10px"><i>0</i><i>5</i><i>-</i><i>1</i><i>8</i><i> </i><i>0</i><i>0</i><i>:</i><i>0</i><i>0</i><i> </i><i style="width:7.06px">到</i><i> </i><i>0</i><i>5</i><i>-</i><i>1</i><i>9</i><i> </i><i>0</i><i>0</i><i>:</i><i>0</i><i>0</i></div>
<div class="cell link" style="left:463.00px;width:67.40px;top:153.10px;font-size:7.8px;line-height:10px"><span class="k8">会</span><span class="k8">员</span><span class="k8">设</span><span class="k8">置</span></div>
<div class="cell" style="left:530.40px;width:67.90px;top:153.10px;font-size:7.8px;line-height:10px;color:#333"><span class="k8">关</span></div>
<div class="cell" style="left:598.30px;width:55.60px;top:153.10px;font-size:7.8px;line-height:10px;color:#333"><span class="k8">已</span><span class="k8">结</span><span class="k8">束</span></div>
<div class="cell link" style="left:653.90px;width:112.60px;top:153.10px;font-size:7.8px;line-height:10px"><span class="k8">编</span><span class="k8">辑</span></div>
<div class="abs" style="left:0;top:169.40px;width:766.5px;height:24.2px;background:#f7f7f7;border-bottom:1px solid #e9e9e9"></div>
<div class="abs" style="left:20.40px;top:169.40px;width:1px;height:24.2px;background:rgba(0,0,0,0.085)"></div>
<div class="abs" style="left:39.50px;top:169.40px;width:1px;height:24.2px;background:rgba(0,0,0,0.085)"></div>
<div class="abs" style="left:152.30px;top:169.40px;width:1px;height:24.2px;background:rgba(0,0,0,0.085)"></div>
<div class="abs" style="left:349.30px;top:169.40px;width:1px;height:24.2px;background:rgba(0,0,0,0.085)"></div>
<div class="abs" style="left:462.50px;top:169.40px;width:1px;height:24.2px;background:rgba(0,0,0,0.085)"></div>
<div class="abs" style="left:529.90px;top:169.40px;width:1px;height:24.2px;background:rgba(0,0,0,0.085)"></div>
<div class="abs" style="left:597.80px;top:169.40px;width:1px;height:24.2px;background:rgba(0,0,0,0.085)"></div>
<div class="abs" style="left:653.40px;top:169.40px;width:1px;height:24.2px;background:rgba(0,0,0,0.085)"></div>
<div class="cb" style="left:5.70px;top:176.50px"></div>
<div class="cell link" style="left:20.90px;width:19.10px;top:176.90px;font-size:8.5px;line-height:10px">8</div>
<div class="cell link" style="left:40.00px;width:112.80px;top:177.30px;font-size:7.8px;line-height:10px"><span class="k8">满</span>10<span class="k8">元</span><span class="k8">减</span>1</div>
<div class="tag tb" style="left:158.70px;top:174.15px;width:39.8px"><span class="k7">满</span>N<span class="k7">元</span><span class="k7">减</span>/<span class="k7">送</span></div>
<div class="tag tg" style="left:203.70px;top:174.15px;width:33.7px"><span class="k7">循</span><span class="k7">环</span><span class="k7">满</span><span class="k7">减</span></div>
<div class="tag to" style="left:242.60px;top:174.15px;width:33.9px"><span class="k7">指</span><span class="k7">定</span><span class="k7">商</span><span class="k7">品</span></div>
<div class="tag tr" style="left:281.70px;top:174.15px;width:33.9px"><span class="k7">所</span><span class="k7">有</span><span class="k7">会</span><span class="k7">员</span></div>
<div class="cell tm" style="left:349.80px;width:113.20px;top:177.30px"><i>0</i><i>5</i><i>-</i><i>1</i><i>5</i><i> </i><i>0</i><i>0</i><i>:</i><i>0</i><i>0</i><i> </i><i style="width:7.06px">到</i><i> </i><i>0</i><i>5</i><i>-</i><i>3</i><i>1</i><i> </i><i>0</i><i>0</i><i>:</i><i>0</i><i>0</i></div>
<div class="cell link" style="left:463.00px;width:67.40px;top:177.30px;font-size:7.8px;line-height:10px"><span class="k8">会</span><span class="k8">员</span><span class="k8">设</span><span class="k8">置</span></div>
<div class="cell" style="left:530.40px;width:67.90px;top:177.30px;font-size:7.8px;line-height:10px;color:#333"><span class="k8">关</span></div>
<div class="cell" style="left:598.30px;width:55.60px;top:177.30px;font-size:7.8px;line-height:10px;color:#333"><span class="k8">已</span><span class="k8">结</span><span class="k8">束</span></div>
<div class="cell link" style="left:653.90px;width:112.60px;top:177.30px;font-size:7.8px;line-height:10px"><span class="k8">编</span><span class="k8">辑</span></div>
<div class="abs" style="left:0;top:193.60px;width:766.5px;height:24.2px;background:#fff;border-bottom:1px solid #e9e9e9"></div>
<div class="abs" style="left:20.40px;top:193.60px;width:1px;height:24.2px;background:rgba(0,0,0,0.085)"></div>
<div class="abs" style="left:39.50px;top:193.60px;width:1px;height:24.2px;background:rgba(0,0,0,0.085)"></div>
<div class="abs" style="left:152.30px;top:193.60px;width:1px;height:24.2px;background:rgba(0,0,0,0.085)"></div>
<div class="abs" style="left:349.30px;top:193.60px;width:1px;height:24.2px;background:rgba(0,0,0,0.085)"></div>
<div class="abs" style="left:462.50px;top:193.60px;width:1px;height:24.2px;background:rgba(0,0,0,0.085)"></div>
<div class="abs" style="left:529.90px;top:193.60px;width:1px;height:24.2px;background:rgba(0,0,0,0.085)"></div>
<div class="abs" style="left:597.80px;top:193.60px;width:1px;height:24.2px;background:rgba(0,0,0,0.085)"></div>
<div class="abs" style="left:653.40px;top:193.60px;width:1px;height:24.2px;background:rgba(0,0,0,0.085)"></div>
<div class="cb" style="left:5.70px;top:200.70px"></div>
<div class="cell link" style="left:20.90px;width:19.10px;top:201.10px;font-size:8.5px;line-height:10px">9</div>
<div class="cell link" style="left:40.00px;width:112.80px;top:201.50px;font-size:7.8px;line-height:10px">XXX</div>
<div class="tag tb" style="left:158.70px;top:198.35px;width:39.8px"><span class="k7">满</span>N<span class="k7">元</span><span class="k7">减</span>/<span class="k7">送</span></div>
<div class="tag tg" style="left:203.70px;top:198.35px;width:33.7px"><span class="k7">阶</span><span class="k7">梯</span><span class="k7">满</span><span class="k7">减</span></div>
<div class="tag to" style="left:242.60px;top:198.35px;width:33.9px"><span class="k7">所</span><span class="k7">有</span><span class="k7">商</span><span class="k7">品</span></div>
<div class="tag tr" style="left:281.70px;top:198.35px;width:33.9px"><span class="k7">所</span><span class="k7">有</span><span class="k7">会</span><span class="k7">员</span></div>
<div class="cell tm" style="left:349.80px;width:113.20px;top:201.50px"><i>0</i><i>5</i><i>-</i><i>0</i><i>9</i><i> </i><i>0</i><i>0</i><i>:</i><i>0</i><i>0</i><i> </i><i style="width:7.06px">到</i><i> </i><i>0</i><i>5</i><i>-</i><i>1</i><i>7</i><i> </i><i>0</i><i>0</i><i>:</i><i>0</i><i>0</i></div>
<div class="cell link" style="left:463.00px;width:67.40px;top:201.50px;font-size:7.8px;line-height:10px"><span class="k8">会</span><span class="k8">员</span><span class="k8">设</span><span class="k8">置</span></div>
<div class="cell" style="left:530.40px;width:67.90px;top:201.50px;font-size:7.8px;line-height:10px;color:#333"><span class="k8">关</span></div>
<div class="cell" style="left:598.30px;width:55.60px;top:201.50px;font-size:7.8px;line-height:10px;color:#333"><span class="k8">已</span><span class="k8">结</span><span class="k8">束</span></div>
<div class="cell link" style="left:653.90px;width:112.60px;top:201.50px;font-size:7.8px;line-height:10px"><span class="k8">编</span><span class="k8">辑</span></div>
<div class="abs" style="left:0;top:217.80px;width:766.5px;height:24.2px;background:#f7f7f7;border-bottom:1px solid #e9e9e9"></div>
<div class="abs" style="left:20.40px;top:217.80px;width:1px;height:24.2px;background:rgba(0,0,0,0.085)"></div>
<div class="abs" style="left:39.50px;top:217.80px;width:1px;height:24.2px;background:rgba(0,0,0,0.085)"></div>
<div class="abs" style="left:152.30px;top:217.80px;width:1px;height:24.2px;background:rgba(0,0,0,0.085)"></div>
<div class="abs" style="left:349.30px;top:217.80px;width:1px;height:24.2px;background:rgba(0,0,0,0.085)"></div>
<div class="abs" style="left:462.50px;top:217.80px;width:1px;height:24.2px;background:rgba(0,0,0,0.085)"></div>
<div class="abs" style="left:529.90px;top:217.80px;width:1px;height:24.2px;background:rgba(0,0,0,0.085)"></div>
<div class="abs" style="left:597.80px;top:217.80px;width:1px;height:24.2px;background:rgba(0,0,0,0.085)"></div>
<div class="abs" style="left:653.40px;top:217.80px;width:1px;height:24.2px;background:rgba(0,0,0,0.085)"></div>
<div class="cb" style="left:5.70px;top:224.90px"></div>
<div class="cell link" style="left:20.90px;width:19.10px;top:225.30px;font-size:8.5px;line-height:10px">10</div>
<div class="cell link" style="left:40.00px;width:112.80px;top:225.70px;font-size:7.8px;line-height:10px"><span class="k8">哈</span><span class="k8">哈</span></div>
<div class="tag tb" style="left:158.70px;top:222.55px;width:39.8px"><span class="k7">满</span>N<span class="k7">元</span><span class="k7">减</span>/<span class="k7">送</span></div>
<div class="tag tg" style="left:203.70px;top:222.55px;width:33.7px"><span class="k7">阶</span><span class="k7">梯</span><span class="k7">满</span><span class="k7">减</span></div>
<div class="tag to" style="left:242.60px;top:222.55px;width:33.9px"><span class="k7">指</span><span class="k7">定</span><span class="k7">商</span><span class="k7">品</span></div>
<div class="tag tr" style="left:281.70px;top:222.55px;width:46.7px"><span class="k7">指</span><span class="k7">定</span><span class="k7">会</span><span class="k7">员</span><span class="k7">等</span><span class="k7">级</span></div>
<div class="cell tm" style="left:349.80px;width:113.20px;top:225.70px"><i>0</i><i>5</i><i>-</i><i>0</i><i>6</i><i> </i><i>0</i><i>0</i><i>:</i><i>0</i><i>0</i><i> </i><i style="width:7.06px">到</i><i> </i><i>0</i><i>5</i><i>-</i><i>1</i><i>4</i><i> </i><i>0</i><i>0</i><i>:</i><i>0</i><i>0</i></div>
<div class="cell link" style="left:463.00px;width:67.40px;top:225.70px;font-size:7.8px;line-height:10px"><span class="k8">会</span><span class="k8">员</span><span class="k8">设</span><span class="k8">置</span></div>
<div class="cell" style="left:530.40px;width:67.90px;top:225.70px;font-size:7.8px;line-height:10px;color:#333"><span class="k8">关</span></div>
<div class="cell" style="left:598.30px;width:55.60px;top:225.70px;font-size:7.8px;line-height:10px;color:#333"><span class="k8">已</span><span class="k8">结</span><span class="k8">束</span></div>
<div class="cell link" style="left:653.90px;width:112.60px;top:225.70px;font-size:7.8px;line-height:10px"><span class="k8">编</span><span class="k8">辑</span></div>
<div class="abs" style="left:0;top:242.00px;width:766.5px;height:24.2px;background:#fff;border-bottom:1px solid #e9e9e9"></div>
<div class="abs" style="left:20.40px;top:242.00px;width:1px;height:24.2px;background:rgba(0,0,0,0.085)"></div>
<div class="abs" style="left:39.50px;top:242.00px;width:1px;height:24.2px;background:rgba(0,0,0,0.085)"></div>
<div class="abs" style="left:152.30px;top:242.00px;width:1px;height:24.2px;background:rgba(0,0,0,0.085)"></div>
<div class="abs" style="left:349.30px;top:242.00px;width:1px;height:24.2px;background:rgba(0,0,0,0.085)"></div>
<div class="abs" style="left:462.50px;top:242.00px;width:1px;height:24.2px;background:rgba(0,0,0,0.085)"></div>
<div class="abs" style="left:529.90px;top:242.00px;width:1px;height:24.2px;background:rgba(0,0,0,0.085)"></div>
<div class="abs" style="left:597.80px;top:242.00px;width:1px;height:24.2px;background:rgba(0,0,0,0.085)"></div>
<div class="abs" style="left:653.40px;top:242.00px;width:1px;height:24.2px;background:rgba(0,0,0,0.085)"></div>
<div class="cb" style="left:5.70px;top:249.10px"></div>
<div class="cell link" style="left:20.90px;width:19.10px;top:249.50px;font-size:8.5px;line-height:10px">11</div>
<div class="cell link" style="left:40.00px;width:112.80px;top:249.90px;font-size:7.8px;line-height:10px"><span class="k8">五</span><span class="k8">一</span><span class="k8">活</span><span class="k8">动</span></div>
<div class="tag tb" style="left:158.70px;top:246.75px;width:39.8px"><span class="k7">满</span>N<span class="k7">元</span><span class="k7">减</span>/<span class="k7">送</span></div>
<div class="tag tg" style="left:203.70px;top:246.75px;width:33.7px"><span class="k7">阶</span><span class="k7">梯</span><span class="k7">满</span><span class="k7">减</span></div>
<div class="tag to" style="left:242.60px;top:246.75px;width:33.9px"><span class="k7">所</span><span class="k7">有</span><span class="k7">商</span><span class="k7">品</span></div>
<div class="tag tr" style="left:281.70px;top:246.75px;width:33.9px"><span class="k7">所</span><span class="k7">有</span><span class="k7">会</span><span class="k7">员</span></div>
<div class="cell tm" style="left:349.80px;width:113.20px;top:249.90px"><i>0</i><i>4</i><i>-</i><i>2</i><i>6</i><i> </i><i>0</i><i>0</i><i>:</i><i>0</i><i>0</i><i> </i><i style="width:7.06px">到</i><i> </i><i>0</i><i>4</i><i>-</i><i>2</i><i>7</i><i> </i><i>0</i><i>0</i><i>:</i><i>0</i><i>0</i></div>
<div class="cell link" style="left:463.00px;width:67.40px;top:249.90px;font-size:7.8px;line-height:10px"><span class="k8">会</span><span class="k8">员</span><span class="k8">设</span><span class="k8">置</span></div>
<div class="cell" style="left:530.40px;width:67.90px;top:249.90px;font-size:7.8px;line-height:10px;color:#333"><span class="k8">关</span></div>
<div class="cell" style="left:598.30px;width:55.60px;top:249.90px;font-size:7.8px;line-height:10px;color:#333"><span class="k8">已</span><span class="k8">结</span><span class="k8">束</span></div>
<div class="cell link" style="left:653.90px;width:112.60px;top:249.90px;font-size:7.8px;line-height:10px"><span class="k8">编</span><span class="k8">辑</span></div>
<div class="abs" style="left:0;top:266.20px;width:766.5px;height:24.2px;background:#f7f7f7;border-bottom:1px solid #e9e9e9"></div>
<div class="abs" style="left:20.40px;top:266.20px;width:1px;height:24.2px;background:rgba(0,0,0,0.085)"></div>
<div class="abs" style="left:39.50px;top:266.20px;width:1px;height:24.2px;background:rgba(0,0,0,0.085)"></div>
<div class="abs" style="left:152.30px;top:266.20px;width:1px;height:24.2px;background:rgba(0,0,0,0.085)"></div>
<div class="abs" style="left:349.30px;top:266.20px;width:1px;height:24.2px;background:rgba(0,0,0,0.085)"></div>
<div class="abs" style="left:462.50px;top:266.20px;width:1px;height:24.2px;background:rgba(0,0,0,0.085)"></div>
<div class="abs" style="left:529.90px;top:266.20px;width:1px;height:24.2px;background:rgba(0,0,0,0.085)"></div>
<div class="abs" style="left:597.80px;top:266.20px;width:1px;height:24.2px;background:rgba(0,0,0,0.085)"></div>
<div class="abs" style="left:653.40px;top:266.20px;width:1px;height:24.2px;background:rgba(0,0,0,0.085)"></div>
<div class="cb" style="left:5.70px;top:273.30px"></div>
<div class="cell link" style="left:20.90px;width:19.10px;top:273.70px;font-size:8.5px;line-height:10px">12</div>
<div class="cell link" style="left:40.00px;width:112.80px;top:274.10px;font-size:7.8px;line-height:10px"><span class="k8">优</span><span class="k8">惠</span></div>
<div class="tag tb" style="left:158.70px;top:270.95px;width:39.8px"><span class="k7">满</span>N<span class="k7">元</span><span class="k7">减</span>/<span class="k7">送</span></div>
<div class="tag tg" style="left:203.70px;top:270.95px;width:33.7px"><span class="k7">阶</span><span class="k7">梯</span><span class="k7">满</span><span class="k7">减</span></div>
<div class="tag to" style="left:242.60px;top:270.95px;width:33.9px"><span class="k7">所</span><span class="k7">有</span><span class="k7">商</span><span class="k7">品</span></div>
<div class="tag tr" style="left:281.70px;top:270.95px;width:33.9px"><span class="k7">所</span><span class="k7">有</span><span class="k7">会</span><span class="k7">员</span></div>
<div class="cell tm" style="left:349.80px;width:113.20px;top:274.10px"><i>0</i><i>4</i><i>-</i><i>0</i><i>6</i><i> </i><i>0</i><i>0</i><i>:</i><i>0</i><i>0</i><i> </i><i style="width:7.06px">到</i><i> </i><i>0</i><i>4</i><i>-</i><i>1</i><i>0</i><i> </i><i>0</i><i>0</i><i>:</i><i>0</i><i>0</i></div>
<div class="cell link" style="left:463.00px;width:67.40px;top:274.10px;font-size:7.8px;line-height:10px"><span class="k8">会</span><span class="k8">员</span><span class="k8">设</span><span class="k8">置</span></div>
<div class="cell" style="left:530.40px;width:67.90px;top:274.10px;font-size:7.8px;line-height:10px;color:#333"><span class="k8">关</span></div>
<div class="cell" style="left:598.30px;width:55.60px;top:274.10px;font-size:7.8px;line-height:10px;color:#333"><span class="k8">已</span><span class="k8">结</span><span class="k8">束</span></div>
<div class="cell link" style="left:653.90px;width:112.60px;top:274.10px;font-size:7.8px;line-height:10px"><span class="k8">编</span><span class="k8">辑</span></div>
<div class="abs" style="left:0;top:290.40px;width:766.5px;height:24.2px;background:#fff;border-bottom:1px solid #e9e9e9"></div>
<div class="abs" style="left:20.40px;top:290.40px;width:1px;height:24.2px;background:rgba(0,0,0,0.085)"></div>
<div class="abs" style="left:39.50px;top:290.40px;width:1px;height:24.2px;background:rgba(0,0,0,0.085)"></div>
<div class="abs" style="left:152.30px;top:290.40px;width:1px;height:24.2px;background:rgba(0,0,0,0.085)"></div>
<div class="abs" style="left:349.30px;top:290.40px;width:1px;height:24.2px;background:rgba(0,0,0,0.085)"></div>
<div class="abs" style="left:462.50px;top:290.40px;width:1px;height:24.2px;background:rgba(0,0,0,0.085)"></div>
<div class="abs" style="left:529.90px;top:290.40px;width:1px;height:24.2px;background:rgba(0,0,0,0.085)"></div>
<div class="abs" style="left:597.80px;top:290.40px;width:1px;height:24.2px;background:rgba(0,0,0,0.085)"></div>
<div class="abs" style="left:653.40px;top:290.40px;width:1px;height:24.2px;background:rgba(0,0,0,0.085)"></div>
<div class="cb" style="left:5.70px;top:297.50px"></div>
<div class="cell link" style="left:20.90px;width:19.10px;top:297.90px;font-size:8.5px;line-height:10px">13</div>
<div class="cell link" style="left:40.00px;width:112.80px;top:298.30px;font-size:7.8px;line-height:10px">666</div>
<div class="tag tb" style="left:158.70px;top:295.15px;width:39.8px"><span class="k7">满</span>N<span class="k7">元</span><span class="k7">减</span>/<span class="k7">送</span></div>
<div class="tag tg" style="left:203.70px;top:295.15px;width:33.7px"><span class="k7">阶</span><span class="k7">梯</span><span class="k7">满</span><span class="k7">减</span></div>
<div class="tag to" style="left:242.60px;top:295.15px;width:33.9px"><span class="k7">指</span><span class="k7">定</span><span class="k7">商</span><span class="k7">品</span></div>
<div class="tag tr" style="left:281.70px;top:295.15px;width:33.9px"><span class="k7">所</span><span class="k7">有</span><span class="k7">会</span><span class="k7">员</span></div>
<div class="cell tm" style="left:349.80px;width:113.20px;top:298.30px"><i>0</i><i>3</i><i>-</i><i>2</i><i>9</i><i> </i><i>0</i><i>0</i><i>:</i><i>0</i><i>0</i><i> </i><i style="width:7.06px">到</i><i> </i><i>0</i><i>3</i><i>-</i><i>3</i><i>1</i><i> </i><i>0</i><i>0</i><i>:</i><i>0</i><i>0</i></div>
<div class="cell link" style="left:463.00px;width:67.40px;top:298.30px;font-size:7.8px;line-height:10px"><span class="k8">会</span><span class="k8">员</span><span class="k8">设</span><span class="k8">置</span></div>
<div class="cell" style="left:530.40px;width:67.90px;top:298.30px;font-size:7.8px;line-height:10px;color:#333"><span class="k8">关</span></div>
<div class="cell" style="left:598.30px;width:55.60px;top:298.30px;font-size:7.8px;line-height:10px;color:#333"><span class="k8">已</span><span class="k8">结</span><span class="k8">束</span></div>
<div class="cell link" style="left:653.90px;width:112.60px;top:298.30px;font-size:7.8px;line-height:10px"><span class="k8">编</span><span class="k8">辑</span></div>
<div class="abs" style="left:0;top:314.60px;width:766.5px;height:24.2px;background:#f7f7f7;border-bottom:1px solid #e9e9e9"></div>
<div class="abs" style="left:20.40px;top:314.60px;width:1px;height:24.2px;background:rgba(0,0,0,0.085)"></div>
<div class="abs" style="left:39.50px;top:314.60px;width:1px;height:24.2px;background:rgba(0,0,0,0.085)"></div>
<div class="abs" style="left:152.30px;top:314.60px;width:1px;height:24.2px;background:rgba(0,0,0,0.085)"></div>
<div class="abs" style="left:349.30px;top:314.60px;width:1px;height:24.2px;background:rgba(0,0,0,0.085)"></div>
<div class="abs" style="left:462.50px;top:314.60px;width:1px;height:24.2px;background:rgba(0,0,0,0.085)"></div>
<div class="abs" style="left:529.90px;top:314.60px;width:1px;height:24.2px;background:rgba(0,0,0,0.085)"></div>
<div class="abs" style="left:597.80px;top:314.60px;width:1px;height:24.2px;background:rgba(0,0,0,0.085)"></div>
<div class="abs" style="left:653.40px;top:314.60px;width:1px;height:24.2px;background:rgba(0,0,0,0.085)"></div>
<div class="cb" style="left:5.70px;top:321.70px"></div>
<div class="cell link" style="left:20.90px;width:19.10px;top:322.10px;font-size:8.5px;line-height:10px">14</div>
<div class="cell link" style="left:40.00px;width:112.80px;top:322.50px;font-size:7.8px;line-height:10px"><span class="k8">促</span><span class="k8">销</span><span class="k8">商</span><span class="k8">品</span><span class="k8">优</span><span class="k8">惠</span><span class="k8">活</span><span class="k8">动</span></div>
<div class="tag tb" style="left:158.70px;top:319.35px;width:39.8px"><span class="k7">满</span>N<span class="k7">元</span><span class="k7">减</span>/<span class="k7">送</span></div>
<div class="tag tg" style="left:203.70px;top:319.35px;width:33.7px"><span class="k7">阶</span><span class="k7">梯</span><span class="k7">满</span><span class="k7">减</span></div>
<div class="tag to" style="left:242.60px;top:319.35px;width:33.9px"><span class="k7">所</span><span class="k7">有</span><span class="k7">商</span><span class="k7">品</span></div>
<div class="tag tr" style="left:281.70px;top:319.35px;width:33.9px"><span class="k7">所</span><span class="k7">有</span><span class="k7">会</span><span class="k7">员</span></div>
<div class="cell tm" style="left:349.80px;width:113.20px;top:322.50px"><i>0</i><i>3</i><i>-</i><i>2</i><i>4</i><i> </i><i>0</i><i>0</i><i>:</i><i>0</i><i>0</i><i> </i><i style="width:7.06px">到</i><i> </i><i>0</i><i>3</i><i>-</i><i>3</i><i>1</i><i> </i><i>0</i><i>0</i><i>:</i><i>0</i><i>0</i></div>
<div class="cell link" style="left:463.00px;width:67.40px;top:322.50px;font-size:7.8px;line-height:10px"><span class="k8">会</span><span class="k8">员</span><span class="k8">设</span><span class="k8">置</span></div>
<div class="cell" style="left:530.40px;width:67.90px;top:322.50px;font-size:7.8px;line-height:10px;color:#333"><span class="k8">关</span></div>
<div class="cell" style="left:598.30px;width:55.60px;top:322.50px;font-size:7.8px;line-height:10px;color:#333"><span class="k8">已</span><span class="k8">结</span><span class="k8">束</span></div>
<div class="cell link" style="left:653.90px;width:112.60px;top:322.50px;font-size:7.8px;line-height:10px"><span class="k8">编</span><span class="k8">辑</span></div>
<div class="abs" style="left:0;top:338.80px;width:766.5px;height:24.2px;background:#fff;border-bottom:1px solid #e9e9e9"></div>
<div class="abs" style="left:20.40px;top:338.80px;width:1px;height:24.2px;background:rgba(0,0,0,0.085)"></div>
<div class="abs" style="left:39.50px;top:338.80px;width:1px;height:24.2px;background:rgba(0,0,0,0.085)"></div>
<div class="abs" style="left:152.30px;top:338.80px;width:1px;height:24.2px;background:rgba(0,0,0,0.085)"></div>
<div class="abs" style="left:349.30px;top:338.80px;width:1px;height:24.2px;background:rgba(0,0,0,0.085)"></div>
<div class="abs" style="left:462.50px;top:338.80px;width:1px;height:24.2px;background:rgba(0,0,0,0.085)"></div>
<div class="abs" style="left:529.90px;top:338.80px;width:1px;height:24.2px;background:rgba(0,0,0,0.085)"></div>
<div class="abs" style="left:597.80px;top:338.80px;width:1px;height:24.2px;background:rgba(0,0,0,0.085)"></div>
<div class="abs" style="left:653.40px;top:338.80px;width:1px;height:24.2px;background:rgba(0,0,0,0.085)"></div>
<div class="cb" style="left:5.70px;top:345.90px"></div>
<div class="cell link" style="left:20.90px;width:19.10px;top:346.30px;font-size:8.5px;line-height:10px">15</div>
<div class="cell link" style="left:40.00px;width:112.80px;top:346.70px;font-size:7.8px;line-height:10px"><span class="k8">测</span><span class="k8">试</span><span class="k8">会</span><span class="k8">员</span></div>
<div class="tag tb" style="left:158.70px;top:343.55px;width:39.8px"><span class="k7">满</span>N<span class="k7">元</span><span class="k7">减</span>/<span class="k7">送</span></div>
<div class="tag tg" style="left:203.70px;top:343.55px;width:33.7px"><span class="k7">阶</span><span class="k7">梯</span><span class="k7">满</span><span class="k7">减</span></div>
<div class="tag to" style="left:242.60px;top:343.55px;width:33.9px"><span class="k7">指</span><span class="k7">定</span><span class="k7">商</span><span class="k7">品</span></div>
<div class="tag tr" style="left:281.70px;top:343.55px;width:33.9px"><span class="k7">所</span><span class="k7">有</span><span class="k7">会</span><span class="k7">员</span></div>
<div class="cell tm" style="left:349.80px;width:113.20px;top:346.70px"><i>0</i><i>3</i><i>-</i><i>2</i><i>3</i><i> </i><i>0</i><i>0</i><i>:</i><i>0</i><i>0</i><i> </i><i style="width:7.06px">到</i><i> </i><i>0</i><i>3</i><i>-</i><i>2</i><i>4</i><i> </i><i>0</i><i>0</i><i>:</i><i>0</i><i>0</i></div>
<div class="cell link" style="left:463.00px;width:67.40px;top:346.70px;font-size:7.8px;line-height:10px"><span class="k8">会</span><span class="k8">员</span><span class="k8">设</span><span class="k8">置</span></div>
<div class="cell" style="left:530.40px;width:67.90px;top:346.70px;font-size:7.8px;line-height:10px;color:#333"><span class="k8">关</span></div>
<div class="cell" style="left:598.30px;width:55.60px;top:346.70px;font-size:7.8px;line-height:10px;color:#333"><span class="k8">已</span><span class="k8">结</span><span class="k8">束</span></div>
<div class="cell link" style="left:653.90px;width:112.60px;top:346.70px;font-size:7.8px;line-height:10px"><span class="k8">编</span><span class="k8">辑</span></div>
<div class="abs" style="left:0;top:363.00px;width:766.5px;height:24.2px;background:#f7f7f7;border-bottom:1px solid #e9e9e9"></div>
<div class="abs" style="left:20.40px;top:363.00px;width:1px;height:24.2px;background:rgba(0,0,0,0.085)"></div>
<div class="abs" style="left:39.50px;top:363.00px;width:1px;height:24.2px;background:rgba(0,0,0,0.085)"></div>
<div class="abs" style="left:152.30px;top:363.00px;width:1px;height:24.2px;background:rgba(0,0,0,0.085)"></div>
<div class="abs" style="left:349.30px;top:363.00px;width:1px;height:24.2px;background:rgba(0,0,0,0.085)"></div>
<div class="abs" style="left:462.50px;top:363.00px;width:1px;height:24.2px;background:rgba(0,0,0,0.085)"></div>
<div class="abs" style="left:529.90px;top:363.00px;width:1px;height:24.2px;background:rgba(0,0,0,0.085)"></div>
<div class="abs" style="left:597.80px;top:363.00px;width:1px;height:24.2px;background:rgba(0,0,0,0.085)"></div>
<div class="abs" style="left:653.40px;top:363.00px;width:1px;height:24.2px;background:rgba(0,0,0,0.085)"></div>
<div class="cb" style="left:5.70px;top:370.10px"></div>
<div class="cell link" style="left:20.90px;width:19.10px;top:370.50px;font-size:8.5px;line-height:10px">16</div>
<div class="cell link" style="left:40.00px;width:112.80px;top:370.90px;font-size:7.8px;line-height:10px"><span class="k8">代</span><span class="k8">垫</span><span class="k8">费</span><span class="k8">用</span>3</div>
<div class="tag tb" style="left:158.70px;top:367.75px;width:39.8px"><span class="k7">满</span>N<span class="k7">元</span><span class="k7">减</span>/<span class="k7">送</span></div>
<div class="tag tg" style="left:203.70px;top:367.75px;width:33.7px"><span class="k7">阶</span><span class="k7">梯</span><span class="k7">满</span><span class="k7">减</span></div>
<div class="tag to" style="left:242.60px;top:367.75px;width:33.9px"><span class="k7">所</span><span class="k7">有</span><span class="k7">商</span><span class="k7">品</span></div>
<div class="tag tr" style="left:281.70px;top:367.75px;width:33.9px"><span class="k7">所</span><span class="k7">有</span><span class="k7">会</span><span class="k7">员</span></div>
<div class="cell tm" style="left:349.80px;width:113.20px;top:370.90px"><i>0</i><i>3</i><i>-</i><i>1</i><i>7</i><i> </i><i>0</i><i>0</i><i>:</i><i>0</i><i>0</i><i> </i><i style="width:7.06px">到</i><i> </i><i>0</i><i>3</i><i>-</i><i>2</i><i>4</i><i> </i><i>0</i><i>0</i><i>:</i><i>0</i><i>0</i></div>
<div class="cell link" style="left:463.00px;width:67.40px;top:370.90px;font-size:7.8px;line-height:10px"><span class="k8">会</span><span class="k8">员</span><span class="k8">设</span><span class="k8">置</span></div>
<div class="cell" style="left:530.40px;width:67.90px;top:370.90px;font-size:7.8px;line-height:10px;color:#333"><span class="k8">关</span></div>
<div class="cell" style="left:598.30px;width:55.60px;top:370.90px;font-size:7.8px;line-height:10px;color:#333"><span class="k8">已</span><span class="k8">结</span><span class="k8">束</span></div>
<div class="cell link" style="left:653.90px;width:112.60px;top:370.90px;font-size:7.8px;line-height:10px"><span class="k8">编</span><span class="k8">辑</span></div>
<div class="abs" style="left:0;top:387.20px;width:766.5px;height:24.2px;background:#fff;border-bottom:1px solid #e9e9e9"></div>
<div class="abs" style="left:20.40px;top:387.20px;width:1px;height:24.2px;background:rgba(0,0,0,0.085)"></div>
<div class="abs" style="left:39.50px;top:387.20px;width:1px;height:24.2px;background:rgba(0,0,0,0.085)"></div>
<div class="abs" style="left:152.30px;top:387.20px;width:1px;height:24.2px;background:rgba(0,0,0,0.085)"></div>
<div class="abs" style="left:349.30px;top:387.20px;width:1px;height:24.2px;background:rgba(0,0,0,0.085)"></div>
<div class="abs" style="left:462.50px;top:387.20px;width:1px;height:24.2px;background:rgba(0,0,0,0.085)"></div>
<div class="abs" style="left:529.90px;top:387.20px;width:1px;height:24.2px;background:rgba(0,0,0,0.085)"></div>
<div class="abs" style="left:597.80px;top:387.20px;width:1px;height:24.2px;background:rgba(0,0,0,0.085)"></div>
<div class="abs" style="left:653.40px;top:387.20px;width:1px;height:24.2px;background:rgba(0,0,0,0.085)"></div>
<div class="cb" style="left:5.70px;top:394.30px"></div>
<div class="cell link" style="left:20.90px;width:19.10px;top:394.70px;font-size:8.5px;line-height:10px">17</div>
<div class="cell link" style="left:40.00px;width:112.80px;top:395.10px;font-size:7.8px;line-height:10px"><span class="k8">自</span><span class="k8">营</span><span class="k8">费</span><span class="k8">用</span>3</div>
<div class="tag tb" style="left:158.70px;top:391.95px;width:39.8px"><span class="k7">满</span>N<span class="k7">元</span><span class="k7">减</span>/<span class="k7">送</span></div>
<div class="tag tg" style="left:203.70px;top:391.95px;width:33.7px"><span class="k7">阶</span><span class="k7">梯</span><span class="k7">满</span><span class="k7">减</span></div>
<div class="tag to" style="left:242.60px;top:391.95px;width:33.9px"><span class="k7">所</span><span class="k7">有</span><span class="k7">商</span><span class="k7">品</span></div>
<div class="tag tr" style="left:281.70px;top:391.95px;width:33.9px"><span class="k7">所</span><span class="k7">有</span><span class="k7">会</span><span class="k7">员</span></div>
<div class="cell tm" style="left:349.80px;width:113.20px;top:395.10px"><i>0</i><i>3</i><i>-</i><i>1</i><i>7</i><i> </i><i>0</i><i>0</i><i>:</i><i>0</i><i>0</i><i> </i><i style="width:7.06px">到</i><i> </i><i>0</i><i>3</i><i>-</i><i>1</i><i>7</i><i> </i><i>0</i><i>0</i><i>:</i><i>0</i><i>0</i></div>
<div class="cell link" style="left:463.00px;width:67.40px;top:395.10px;font-size:7.8px;line-height:10px"><span class="k8">会</span><span class="k8">员</span><span class="k8">设</span><span class="k8">置</span></div>
<div class="cell" style="left:530.40px;width:67.90px;top:395.10px;font-size:7.8px;line-height:10px;color:#333"><span class="k8">关</span></div>
<div class="cell" style="left:598.30px;width:55.60px;top:395.10px;font-size:7.8px;line-height:10px;color:#333"><span class="k8">已</span><span class="k8">结</span><span class="k8">束</span></div>
<div class="cell link" style="left:653.90px;width:112.60px;top:395.10px;font-size:7.8px;line-height:10px"><span class="k8">编</span><span class="k8">辑</span></div>
<div class="abs" style="left:0;top:411.40px;width:766.5px;height:24.2px;background:#f7f7f7;border-bottom:1px solid #e9e9e9"></div>
<div class="abs" style="left:20.40px;top:411.40px;width:1px;height:24.2px;background:rgba(0,0,0,0.085)"></div>
<div class="abs" style="left:39.50px;top:411.40px;width:1px;height:24.2px;background:rgba(0,0,0,0.085)"></div>
<div class="abs" style="left:152.30px;top:411.40px;width:1px;height:24.2px;background:rgba(0,0,0,0.085)"></div>
<div class="abs" style="left:349.30px;top:411.40px;width:1px;height:24.2px;background:rgba(0,0,0,0.085)"></div>
<div class="abs" style="left:462.50px;top:411.40px;width:1px;height:24.2px;background:rgba(0,0,0,0.085)"></div>
<div class="abs" style="left:529.90px;top:411.40px;width:1px;height:24.2px;background:rgba(0,0,0,0.085)"></div>
<div class="abs" style="left:597.80px;top:411.40px;width:1px;height:24.2px;background:rgba(0,0,0,0.085)"></div>
<div class="abs" style="left:653.40px;top:411.40px;width:1px;height:24.2px;background:rgba(0,0,0,0.085)"></div>
</div>
<div class="abs" style="left:1061.5px;top:119.1px;width:9.5px;height:415.4px;background:#f3f3f3"></div>
<svg class="abs" style="left:1063.5px;top:122.5px" width="6" height="4" viewBox="0 0 6 4"><path d="M0.5 3.5 H5.5 L3 0.5z" fill="#a3a3a3"></path></svg>
<div class="abs" style="left:1062px;top:129px;width:7px;height:339.5px;background:#c1c1c1"></div>
<svg class="abs" style="left:1063.5px;top:527.5px" width="6" height="4" viewBox="0 0 6 4"><path d="M0.5 0.5 H5.5 L3 3.5z" fill="#505050"></path></svg>
<div class="abs" style="left:64.8px;top:117px;width:765.6px;height:26.5px;border:2px solid #e0161e"></div>
<div class="abs" style="left:661px;top:82.5px;font-size:17.1px;line-height:20px;font-weight:bold;color:#e8141c;-webkit-text-stroke:0.45px #e8141c;white-space:nowrap;transform:scaleY(0.9);transform-origin:0 0"><span class="k17">保</span><span class="k17">存</span><span class="k17">成</span><span class="k17">功</span><span class="k17">后</span><span class="k17">的</span><span class="k17">活</span><span class="k17">动</span><span class="k17">方</span><span class="k17">案</span><span class="k17">在</span><span class="k17">列</span><span class="k17">表</span><span class="k17">显</span><span class="k17">示</span></div>
<div class="abs" style="left:64.5px;top:534.5px;width:1007px;height:22.5px;background:#f8f9fa;border-top:1px solid #e6e6e6"></div>
<div class="pbtn" style="left:67.3px;width:15px;color:#d5d5d5;background:#fff;border-color:#eeeeee">|◂</div>
<div class="pbtn" style="left:82.3px;width:15px;color:#d5d5d5;background:#fff;border-color:#eeeeee">◂</div>
<div class="pbtn" style="left:97.3px;width:15px;color:#fff;background:#0d80f8;border-color:#0d80f8">1</div>
<div class="pbtn" style="left:112.3px;width:15px;color:#333;background:#fff;border-color:#e3e3e3">2</div>
<div class="pbtn" style="left:127.3px;width:15px;color:#333;background:#fff;border-color:#e3e3e3">3</div>
<div class="abs" style="left:147.3px;top:541px;font-size:7px;line-height:10px;color:#666;white-space:nowrap"><span class="k7">跳</span><span class="k7">转</span><span class="k7">至</span></div>
<div class="pbtn" style="left:171.7px;width:20px;text-align:left;padding-left:5px">1</div>
<div class="abs" style="left:196px;top:541px;font-size:7px;line-height:10px;color:#888;white-space:nowrap"><span class="k7">页</span></div>
<div class="abs" style="left:209px;top:541px;font-size:7px;line-height:10px;color:#888;white-space:nowrap"><span class="k7">共</span> 3 <span class="k7">页</span></div>
<div class="pbtn" style="left:235.7px;width:15px"><svg width="5" height="6" viewBox="0 0 5 6" style="margin-top:3.5px"><path d="M1 0.5 L4.5 3 L1 5.5z" fill="#333"></path></svg></div>
<div class="pbtn" style="left:250.7px;width:15px"><svg width="6" height="6" viewBox="0 0 6 6" style="margin-top:3.5px"><path d="M0.5 0.5 L4 3 L0.5 5.5z M4.3 0.5 H5.3 V5.5 H4.3z" fill="#333"></path></svg></div>
<div class="pbtn" style="left:271.7px;width:35px;text-align:left;padding-left:7px">20</div>
<svg class="abs" style="left:295px;top:544px" width="6" height="5" viewBox="0 0 6 5"><path d="M0.3 0.5 H5.7 L3 4.5z" fill="#333"></path></svg>
<div class="abs" style="left:312.3px;top:541px;font-size:7px;line-height:10px;color:#888;white-space:nowrap"><span class="k7">条</span><span class="k7">每</span><span class="k7">页</span></div>
<div class="abs" style="left:1006px;top:541px;font-size:6.9px;line-height:10px;color:#9aa0aa;white-space:nowrap">1 - 20 <span class="k7">总</span><span class="k7">计</span>:49</div>
<div class="pbtn" style="left:1054px;top:538.3px;width:14.5px;height:15px;border-color:#ececec"><svg width="7" height="7" viewBox="0 0 7 7" style="margin-top:3.5px"><path d="M5.6 2.3 A2.4 2.4 0 1 0 5.9 4" fill="none" stroke="#555" stroke-width="0.9"></path><path d="M4.3 1 L6.2 1.4 L5.6 3.1z" fill="#555"></path></svg></div>
<div class="abs" style="left:1048.3px;top:409.7px;width:22.8px;height:22.8px;border-radius:50%;background:#1a72d6"></div>
<svg class="abs" style="left:1054px;top:411.5px" width="12" height="10" viewBox="0 0 12 10"><path d="M1.3 1 H7.4 V5.6 H3.2 L1.8 6.8 V5.6 H1.3 Z" fill="none" stroke="#fff" stroke-width="0.8" stroke-linejoin="round"></path><path d="M3 2.6 H5.8 M3 3.9 H5.8" stroke="#fff" stroke-width="0.55"></path><path d="M4.6 4.2 H10.6 V8.3 H10 V9.4 L8.7 8.3 H4.6 Z" fill="#1a72d6" stroke="#fff" stroke-width="0.8" stroke-linejoin="round"></path></svg>
<div class="abs" style="left:1050.5px;top:421.8px;width:19px;font-size:6.2px;line-height:8px;color:#fff;text-align:center;font-weight:bold;white-space:nowrap"><span class="k6">客</span><span class="k6">服</span></div>
<div class="abs" style="left:1065.4px;top:410.6px;width:4.8px;height:4.8px;border-radius:50%;background:#f7701f"></div>
<div class="abs" style="left:1074px;top:535.3px;width:4.7px;height:31.7px;border-radius:2.4px;background:#5a5a5a;overflow:hidden"><div style="position:absolute;left:0;top:19.7px;width:100%;height:13px;background:#48a95c"></div></div>
</body></html>
